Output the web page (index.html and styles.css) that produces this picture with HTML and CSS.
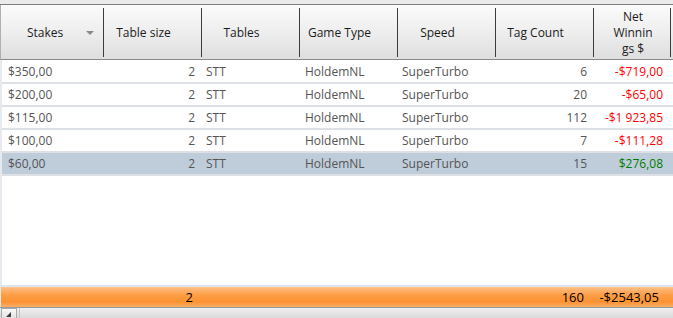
FILE: index.html
```
<!DOCTYPE html>
<html>
<head>
<meta charset="utf-8">
<link rel="stylesheet" href="styles.css">
</head>
<body>
<div class="grid">
  <div class="topstrip"></div>
  <div class="header cols">
    <div class="hcell stakes"><span>Stakes</span><span class="tri"></span></div>
    <div class="hcell">Table size</div>
    <div class="hcell">Tables</div>
    <div class="hcell">Game Type</div>
    <div class="hcell">Speed</div>
    <div class="hcell">Tag Count</div>
    <div class="hcell net"><span>Net</span><span>Winnin</span><span>gs $</span></div>
    <div class="hcell last"></div>
  </div>
  <div class="rows">
    <div class="row cols">
      <div class="c l1">$350,00</div><div class="c r1">2</div><div class="c l2">STT</div><div class="c l3">HoldemNL</div><div class="c l4">SuperTurbo</div><div class="c r2">6</div><div class="c r3 neg">-$719,00</div><div></div>
    </div>
    <div class="row cols">
      <div class="c l1">$200,00</div><div class="c r1">2</div><div class="c l2">STT</div><div class="c l3">HoldemNL</div><div class="c l4">SuperTurbo</div><div class="c r2">20</div><div class="c r3 neg">-$65,00</div><div></div>
    </div>
    <div class="row cols">
      <div class="c l1">$115,00</div><div class="c r1">2</div><div class="c l2">STT</div><div class="c l3">HoldemNL</div><div class="c l4">SuperTurbo</div><div class="c r2">112</div><div class="c r3 neg">-$1 923,85</div><div></div>
    </div>
    <div class="row cols">
      <div class="c l1">$100,00</div><div class="c r1">2</div><div class="c l2">STT</div><div class="c l3">HoldemNL</div><div class="c l4">SuperTurbo</div><div class="c r2">7</div><div class="c r3 neg">-$111,28</div><div></div>
    </div>
    <div class="row cols selected">
      <div class="c l1">$60,00</div><div class="c r1">2</div><div class="c l2">STT</div><div class="c l3">HoldemNL</div><div class="c l4">SuperTurbo</div><div class="c r2">15</div><div class="c r3 pos">$276,08</div><div></div>
    </div>
  </div>
  <div class="empty"></div>
  <div class="footer cols">
    <div></div><div class="f r1">2</div><div></div><div></div><div></div><div class="f r2">160</div><div class="f r3">-$2543,05</div><div></div>
  </div>
  <div class="scrollbar">
    <div class="sbtn"><svg width="6" height="6" viewBox="0 0 6 6"><path d="M5 0 L5 5 L0 5 Z" fill="#404040"/></svg></div>
    <div class="strack"></div>
  </div>
</div>
</body>
</html>
```
FILE: styles.css
```
* { box-sizing: border-box; }
html, body { margin: 0; padding: 0; }
body {
  width: 673px;
  height: 318px;
  overflow: hidden;
  background: #fff;
  font-family: "Open Sans", "Noto Sans", sans-serif;
  font-size: 12px;
}
.grid {
  display: flex;
  flex-direction: column;
  height: 318px;
}
.cols {
  display: grid;
  grid-template-columns: 103px 98px 98px 98px 98px 98px 77px 1fr;
}
.topstrip {
  height: 5px;
  background: #ebebeb;
  border-bottom: 1px solid #7d7d7d;
  flex: none;
}
.header {
  height: 55px;
  flex: none;
  background: linear-gradient(#fbfbfb, #eeeeee 50%, #dedede);
  border-bottom: 1px solid #8a8a8a;
  border-left: 1px solid #b0b0b0;
}
.hcell {
  margin: 3px 0 2px;
  border-right: 1px solid #3c3c3c;
  display: flex;
  align-items: center;
  justify-content: center;
  color: #1c1c1c;
  font-size: 12px;
  padding-right: 18px;
}
.hcell.last { border-right: none; padding-right: 0; }
.hcell.stakes { justify-content: flex-start; padding-left: 26px; padding-right: 0; }
.tri {
  width: 0; height: 0;
  border-left: 4px solid transparent;
  border-right: 4px solid transparent;
  border-top: 4px solid #8a8a8a;
  margin-left: 23px;
  margin-top: 1px;
}
.hcell.net {
  flex-direction: column;
  line-height: 16px;
  padding-left: 2px;
  padding-right: 0;
}
.rows { flex: none; border-left: 2px solid #e6e9ed; padding-top: 1px; }
.row {
  height: 23px;
  border-bottom: 2px solid #dde1e6;
  color: #555;
  align-items: center;
}
.row.selected { background: #bfcddb; }
.c { white-space: nowrap; }
.l1 { padding-left: 6px; }
.l2 { padding-left: 3px; }
.l3 { padding-left: 4px; }
.l4 { padding-left: 3px; }
.r1 { text-align: right; padding-right: 8px; }
.r2 { text-align: right; padding-right: 8px; }
.r3 { text-align: right; padding-right: 9px; }
.neg { color: #ff0000; }
.pos { color: #007a00; }
.empty { flex: 1; border-left: 2px solid #e6e9ed; border-bottom: 2px solid #dfe4ec; }
.footer {
  height: 20px;
  flex: none;
  background: linear-gradient(#fec088, #fd9e45 40%, #fd9233 75%, #fdb06a);
  color: #000;
  font-size: 13px;
  align-items: center;
  border-left: 1px solid #e8e8e8;
}
.f.r1 { padding-right: 9px; }
.f.r2 { padding-right: 10px; }
.f.r3 { padding-right: 12px; }
.scrollbar {
  height: 11px;
  flex: none;
  display: flex;
  border-top: 1px solid #9a9a9a;
  background: linear-gradient(#efefef, #dadada);
  padding-left: 1px;
}
.sbtn {
  width: 16px;
  border: 1px solid #a8a8a8;
  border-bottom: none;
  background: linear-gradient(#fafafa, #e2e2e2);
  display: flex;
  align-items: flex-end;
  justify-content: center;
}
.strack { flex: 1; margin-left: 2px; border-left: 1px solid #c4c4c4; }
```
